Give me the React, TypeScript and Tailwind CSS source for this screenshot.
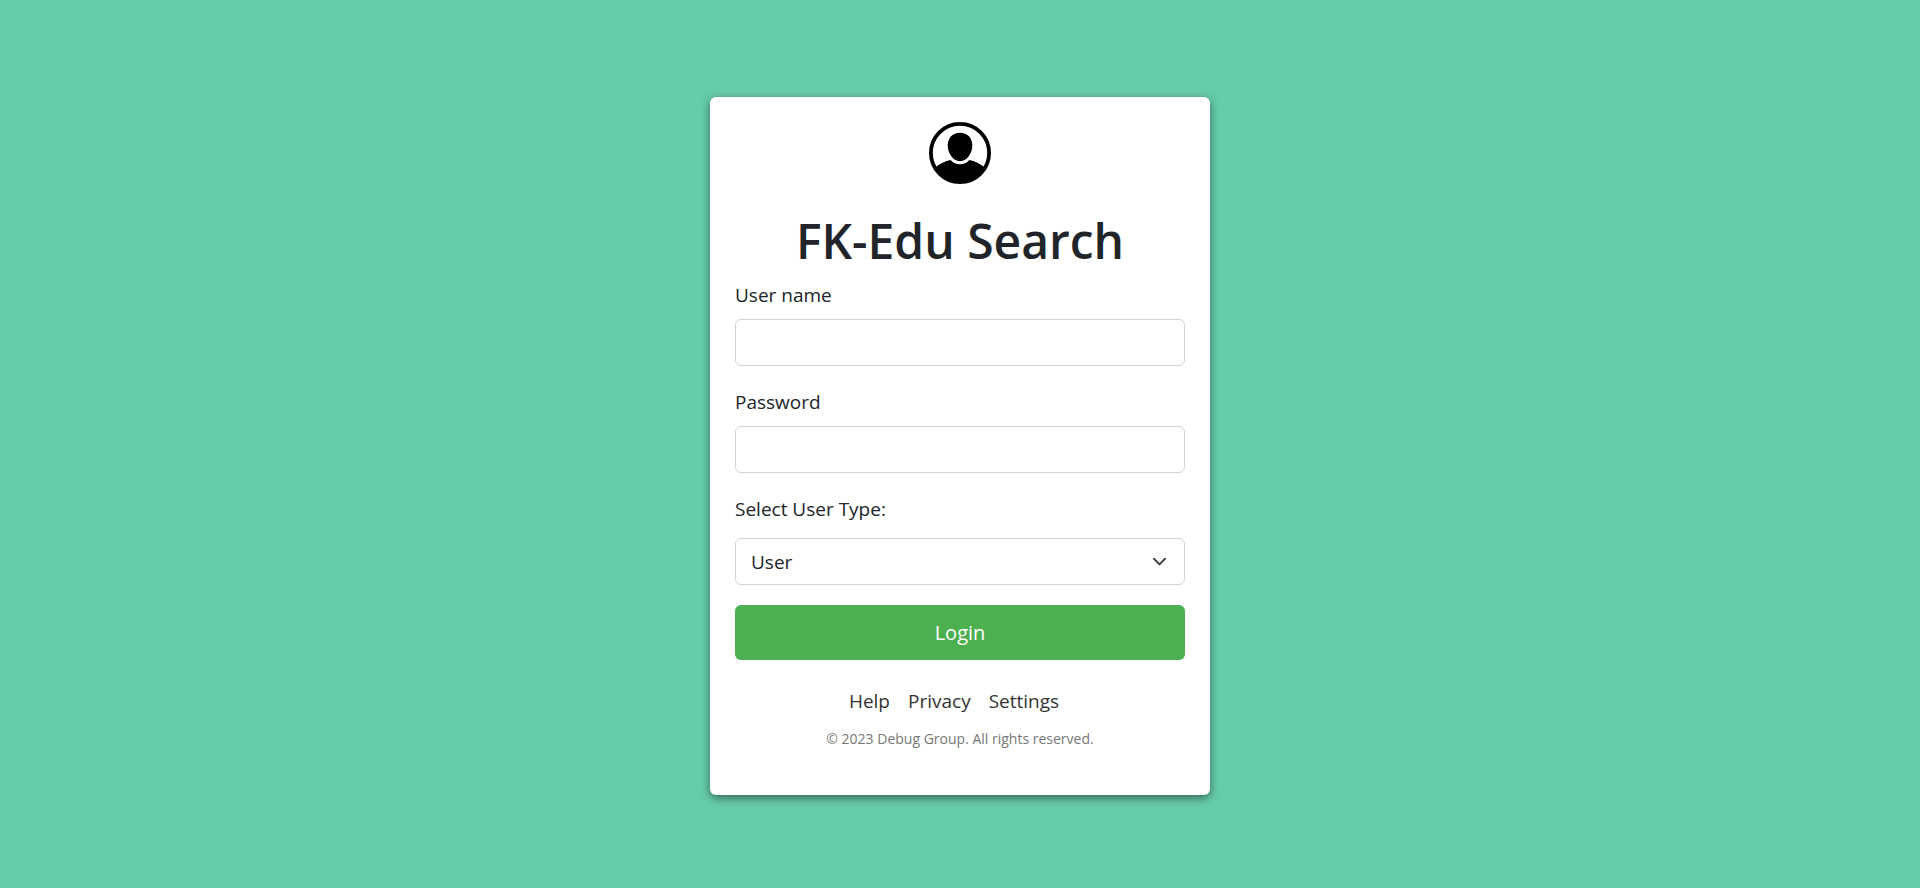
import React from "react";

const fieldClass =
  "block h-[47px] w-full rounded-md border border-[#ced4da] bg-white px-[15px] text-[19px] leading-[30px] text-[#212529] outline-none focus:border-[#86b7fe]";

function Avatar() {
  return (
    <svg viewBox="0 0 62 62" className="size-[62px]" aria-hidden="true">
      <circle cx="31" cy="31" r="29.100" fill="none" stroke="#000" strokeWidth="3.800" />
      <path
        d="M31 10.8c7.200 0 12.300 5 12.300 12.700 0 8.200-5.800 15.700-12.300 15.700s-12.300-7.500-12.300-15.700c0-7.700 5.100-12.700 12.300-12.700Z"
        fill="#000"
      />
      <path
        d="M6.500 45.200C11 41.500 16 39 21.600 37.900C24.300 40.800 27.500 42.200 31 42.200s6.700-1.400 9.400-4.300C46 39 51 41.500 55.500 45.200C50.500 55.500 41.500 61 31 61S11.500 55.500 6.500 45.200Z"
        fill="#000"
      />
    </svg>
  );
}

export default function App() {
  return (
    <main className="flex min-h-screen items-center justify-center bg-[#66cdaa] pt-9 pb-8 font-['Segoe_UI','Open_Sans','Noto_Sans',sans-serif] text-[19px] leading-[30px] text-[#212529]">
      <div className="w-full max-w-[500px] rounded-md bg-white px-[25px] pt-[25px] pb-11 shadow-[0_3px_10px_rgba(0,0,0,0.5)]">
        <div className="flex justify-center">
          <Avatar />
        </div>
        <h1 className="mt-[27px] mb-[9px] text-center text-5xl leading-[60px] font-semibold">FK-Edu Search</h1>
        <form onSubmit={(e) => e.preventDefault()}>
          <label htmlFor="username" className="mb-[9px] block">
            User name
          </label>
          <input id="username" type="text" className={fieldClass} />
          <label htmlFor="password" className="mt-[21px] mb-[9px] block">
            Password
          </label>
          <input id="password" type="password" className={fieldClass} />
          <label htmlFor="usertype" className="mt-[21px] mb-[14px] block">
            Select User Type:
          </label>
          <div className="relative">
            <select id="usertype" className={`${fieldClass} appearance-none`}>
              <option>User</option>
              <option>Expert</option>
              <option>Admin</option>
            </select>
            <svg
              viewBox="0 0 16 16"
              className="pointer-events-none absolute top-4 right-[18px] size-[15px]"
              fill="none"
              stroke="#343a40"
              strokeWidth="2"
              strokeLinecap="round"
              strokeLinejoin="round"
              aria-hidden="true"
            >
              <path d="m2 5 6 6 6-6" />
            </svg>
          </div>
          <button type="submit" className="mt-5 block h-[55px] w-full rounded-md bg-[#4caf50] text-xl text-white">
            Login
          </button>
        </form>
        <nav className="mt-[26px] mr-3 flex justify-center gap-[18px] text-[#333]">
          <a href="#help">Help</a>
          <a href="#privacy">Privacy</a>
          <a href="#settings">Settings</a>
        </nav>
        <p className="mt-[11px] text-center text-sm leading-6 text-[#777]">© 2023 Debug Group. All rights reserved.</p>
      </div>
    </main>
  );
}
